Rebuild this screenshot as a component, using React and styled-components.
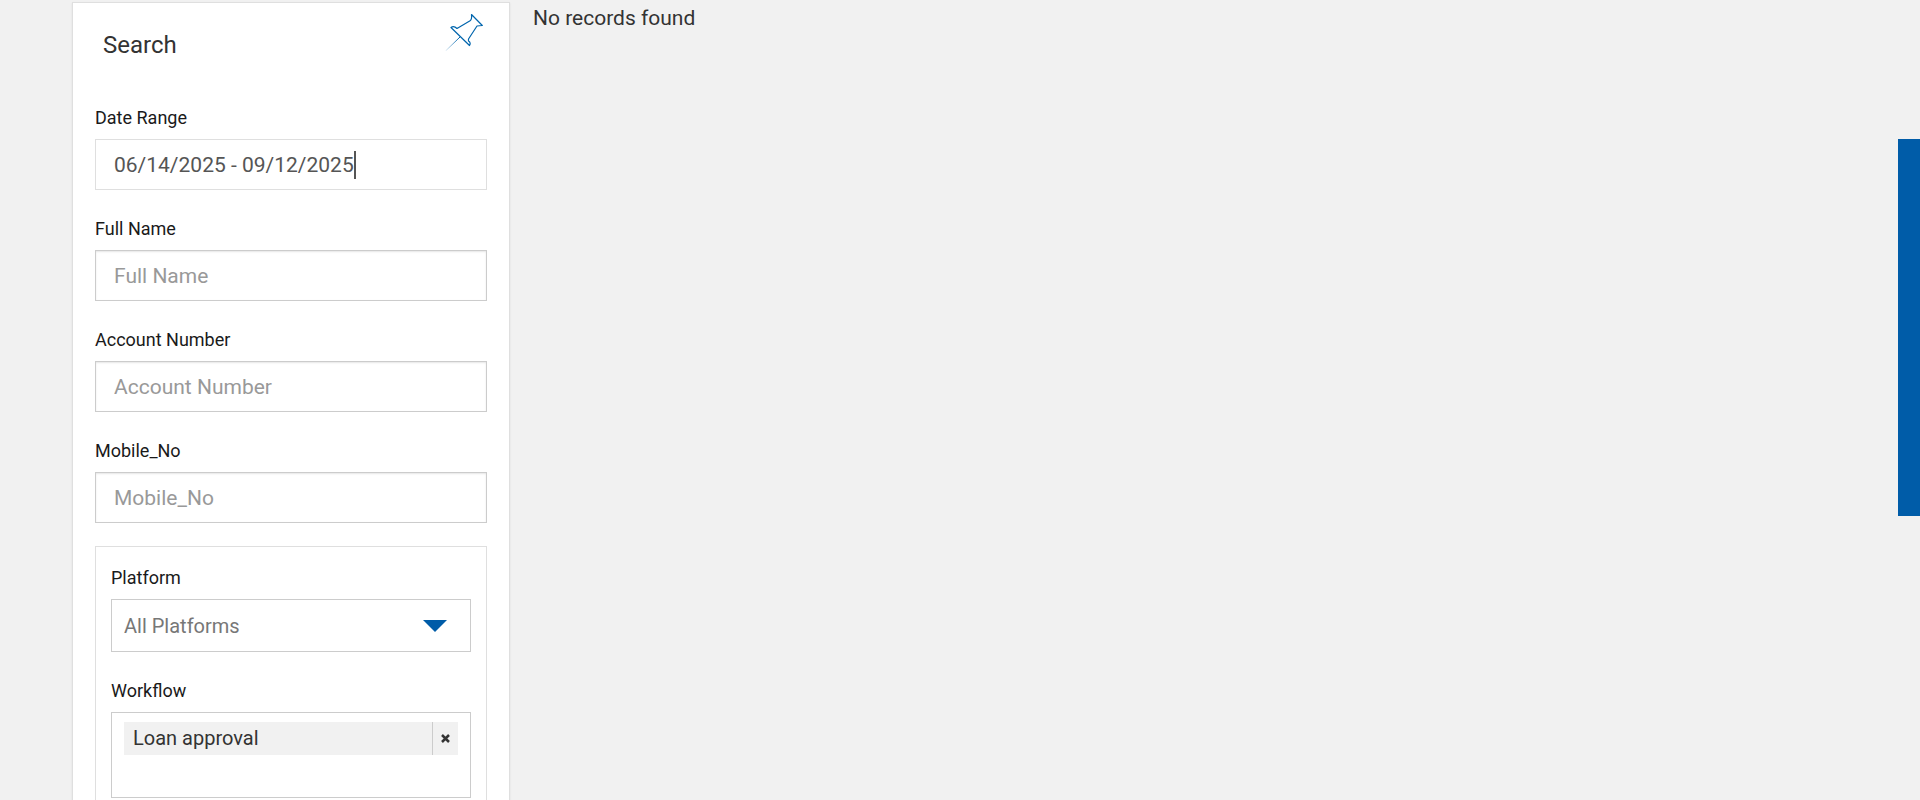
import React, { useState } from "react";
import styled, { createGlobalStyle } from "styled-components";

const GlobalStyle = createGlobalStyle`
  *, *::before, *::after { box-sizing: border-box; }
  body {
    margin: 0;
    background: #f1f1f1;
    color: #333;
    font-family: Roboto, "Liberation Sans", sans-serif;
    font-size: 20px;
    line-height: 28px;
  }
  input, select, button { font-family: inherit; margin: 0; }
`;

const Page = styled.div`
  display: flex;
  align-items: flex-start;
  gap: 23px;
  height: 100vh;
  padding: 2px 22px 0 72px;
  overflow-y: auto;
  scrollbar-width: none;
`;

const Panel = styled.aside`
  flex: 0 0 438px;
  padding: 0 22px 24px;
  background: #fff;
  border: 1px solid #dfdfdf;
  box-shadow: 0 1px 2px rgba(0, 0, 0, 0.08);
`;

const PanelHeader = styled.header`
  display: flex;
  justify-content: space-between;
  align-items: flex-start;
  height: 99px;
  padding: 10px 0 0 8px;
`;

const Title = styled.h2`
  margin: 18px 0 0;
  font-size: 24px;
  line-height: 28px;
  font-weight: 400;
`;

const PinButton = styled.button`
  display: flex;
  padding: 0 4px;
  border: 0;
  background: none;
  cursor: pointer;
`;

const Form = styled.form`
  display: flex;
  flex-direction: column;
  gap: 23px;
`;

const Field = styled.div`
  display: flex;
  flex-direction: column;
  gap: 6px;
`;

const Label = styled.label`
  color: #1a1a1a;
  font-size: 18px;
  line-height: 31px;
`;

const TextInput = styled.input`
  width: 100%;
  height: 51px;
  padding: 1px 18px 0;
  border: 1px solid ${(p) => (p.$active ? "#dfdfdf" : "#ccc")};
  border-radius: 0;
  background: #fff;
  box-shadow: ${(p) => (p.$active ? "none" : "inset 0 1px 2px rgba(0, 0, 0, 0.1)")};
  color: #555;
  font-size: 21px;
  outline: 0;
  &::placeholder { color: #999; opacity: 1; }
`;

const CaretField = styled.div`
  position: relative;
`;

const Caret = styled.span`
  position: absolute;
  top: 12px;
  left: 259px;
  width: 2px;
  height: 28px;
  background: #555;
`;

const Group = styled.div`
  display: flex;
  flex-direction: column;
  gap: 23px;
  padding: 15px;
  border: 1px solid #dfdfdf;
`;

const SelectBox = styled.div`
  display: grid;
  align-items: center;
  & > * { grid-area: 1 / 1; }
`;

const Select = styled.select`
  width: 100%;
  height: 53px;
  padding: 0 60px 0 12px;
  border: 1px solid #ccc;
  border-radius: 0;
  appearance: none;
  background: #fff;
  color: #777;
  font-size: 20px;
  outline: 0;
`;

const Arrow = styled.svg`
  justify-self: end;
  margin-right: 24px;
  pointer-events: none;
`;

const TagBox = styled.div`
  height: 86px;
  padding: 9px 12px;
  border: 1px solid #ccc;
`;

const Tag = styled.div`
  display: flex;
  height: 33px;
  background: #f1f1f1;
`;

const TagText = styled.span`
  flex: 1;
  padding: 0 9px;
  line-height: 33px;
`;

const RemoveButton = styled.button`
  display: flex;
  align-items: center;
  justify-content: center;
  width: 26px;
  padding: 0;
  border: 0;
  border-left: 1px solid #ccc;
  background: none;
  cursor: pointer;
`;

const Results = styled.main`
  flex: 1;
`;

const Message = styled.p`
  margin: 2px 0 0;
  font-size: 21px;
`;

const SideTab = styled.button`
  position: fixed;
  top: 139px;
  right: 0;
  width: 22px;
  height: 377px;
  padding: 0;
  border: 0;
  background: #005ca8;
  cursor: pointer;
`;

const textFields = [
  { id: "full-name", label: "Full Name" },
  { id: "account-number", label: "Account Number" },
  { id: "mobile-no", label: "Mobile_No" },
];

export default function App() {
  const [range, setRange] = useState("06/14/2025 - 09/12/2025");
  return (
    <>
      <GlobalStyle />
      <Page>
        <Panel>
          <PanelHeader>
            <Title>Search</Title>
            <PinButton type="button" aria-label="Pin panel">
              <svg width="38" height="38" viewBox="0 0 38 38" fill="none">
                <defs>
                  <linearGradient id="needle" x1="14" y1="24" x2="0" y2="38" gradientUnits="userSpaceOnUse">
                    <stop stopColor="#0065ad" />
                    <stop offset="1" stopColor="#0065ad" stopOpacity="0.1" />
                  </linearGradient>
                </defs>
                <path
                  d="M26.500 1.500L37.300 12.500L32 13L23.500 26V28C25.500 29 25.500 31 24.500 32.500L6 14.500C8 12.800 10 13.500 12 15.500L25.500 7.500C27.200 6 26.500 4 26.500 1.500Z"
                  stroke="#0065ad"
                  strokeWidth="1.200"
                  strokeLinejoin="round"
                />
                <path d="M15 24L0.500 38" stroke="url(#needle)" />
              </svg>
            </PinButton>
          </PanelHeader>
          <Form>
            <Field>
              <Label htmlFor="date-range">Date Range</Label>
              <CaretField>
                <TextInput id="date-range" $active value={range} onChange={(e) => setRange(e.target.value)} />
                <Caret />
              </CaretField>
            </Field>
            {textFields.map((f) => (
              <Field key={f.id}>
                <Label htmlFor={f.id}>{f.label}</Label>
                <TextInput id={f.id} placeholder={f.label} />
              </Field>
            ))}
            <Group>
              <Field>
                <Label htmlFor="platform">Platform</Label>
                <SelectBox>
                  <Select id="platform">
                    <option>All Platforms</option>
                  </Select>
                  <Arrow width="24" height="12" viewBox="0 0 24 12">
                    <path d="M0 0H24L12 12Z" fill="#005ca8" />
                  </Arrow>
                </SelectBox>
              </Field>
              <Field>
                <Label as="span" id="workflow-label">Workflow</Label>
                <TagBox role="group" aria-labelledby="workflow-label">
                  <Tag>
                    <TagText>Loan approval</TagText>
                    <RemoveButton type="button" aria-label="Remove Loan approval">
                      <svg width="9" height="9" viewBox="0 0 9 9">
                        <path d="M1 1L8 8M8 1L1 8" stroke="#333" strokeWidth="2.500" />
                      </svg>
                    </RemoveButton>
                  </Tag>
                </TagBox>
              </Field>
            </Group>
          </Form>
        </Panel>
        <Results>
          <Message>No records found</Message>
        </Results>
        <SideTab type="button" aria-label="Open side panel" />
      </Page>
    </>
  );
}
